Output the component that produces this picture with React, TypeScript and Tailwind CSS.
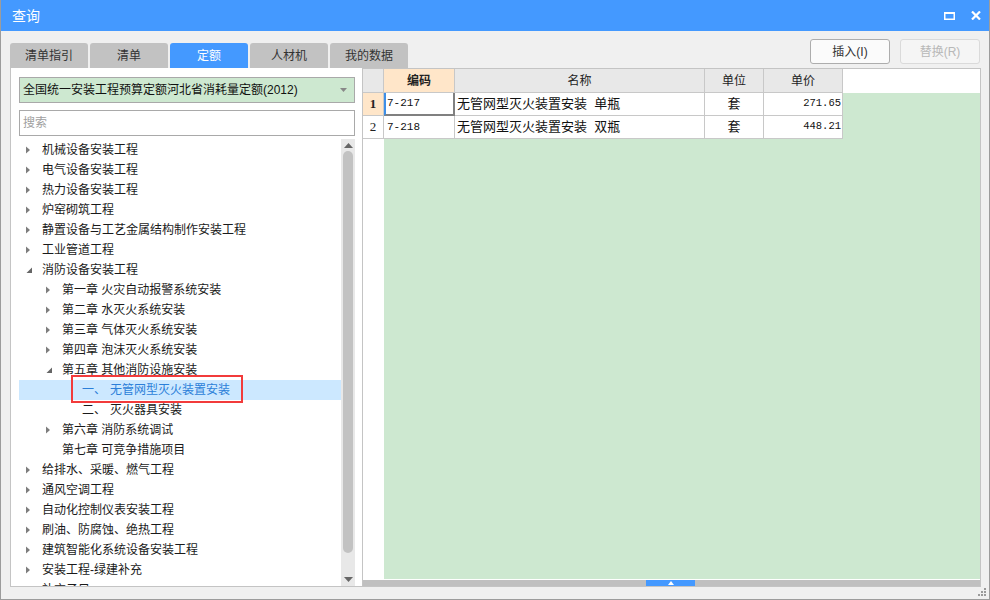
import React from 'react';

type Node = { level: number; text: string; state: 'closed' | 'open' | 'leaf'; prefix?: string; selected?: boolean };

const tree: Node[] = [
    { level: 0, text: '机械设备安装工程', state: 'closed' },
    { level: 0, text: '电气设备安装工程', state: 'closed' },
    { level: 0, text: '热力设备安装工程', state: 'closed' },
    { level: 0, text: '炉窑砌筑工程', state: 'closed' },
    { level: 0, text: '静置设备与工艺金属结构制作安装工程', state: 'closed' },
    { level: 0, text: '工业管道工程', state: 'closed' },
    { level: 0, text: '消防设备安装工程', state: 'open' },
    { level: 1, text: '第一章 火灾自动报警系统安装', state: 'closed' },
    { level: 1, text: '第二章 水灭火系统安装', state: 'closed' },
    { level: 1, text: '第三章 气体灭火系统安装', state: 'closed' },
    { level: 1, text: '第四章 泡沫灭火系统安装', state: 'closed' },
    { level: 1, text: '第五章 其他消防设施安装', state: 'open' },
    { level: 2, prefix: '一、', text: '无管网型灭火装置安装', state: 'leaf', selected: true },
    { level: 2, prefix: '二、', text: '灭火器具安装', state: 'leaf' },
    { level: 1, text: '第六章 消防系统调试', state: 'closed' },
    { level: 1, text: '第七章 可竞争措施项目', state: 'leaf' },
    { level: 0, text: '给排水、采暖、燃气工程', state: 'closed' },
    { level: 0, text: '通风空调工程', state: 'closed' },
    { level: 0, text: '自动化控制仪表安装工程', state: 'closed' },
    { level: 0, text: '刷油、防腐蚀、绝热工程', state: 'closed' },
    { level: 0, text: '建筑智能化系统设备安装工程', state: 'closed' },
    { level: 0, text: '安装工程-绿建补充', state: 'closed' },
    { level: 0, text: '补充子目', state: 'closed' },
];

const indent = ['pl-[7px]', 'pl-[27px]', 'pl-[47px]'];

const tabs = ['清单指引', '清单', '定额', '人材机', '我的数据'];

const rows = [
    { no: '1', code: '7-217', name: '无管网型灭火装置安装  单瓶', unit: '套', price: '271.65' },
    { no: '2', code: '7-218', name: '无管网型灭火装置安装  双瓶', unit: '套', price: '448.21' },
];

function Toggle({ state }: { state: Node['state'] }) {
    return (
        <span className="w-[16px] h-[20px] flex items-center shrink-0">
            {state === 'closed' && (
                <svg width="5" height="8" viewBox="0 0 5 8"><polygon points="0,0.5 4,4 0,7.5" fill="#7d7d7d" /></svg>
            )}
            {state === 'open' && (
                <svg width="7" height="7" viewBox="0 0 7 7"><polygon points="6,0.5 6,6 0.5,6" fill="#666" /></svg>
            )}
        </span>
    );
}

export default function App() {
    return (
        <div className="w-[990px] h-[600px] bg-[#f0f0f0] border-x border-b border-[#9c9c9c] flex flex-col relative overflow-hidden font-['Liberation_Sans','Noto_Sans_CJK_SC',sans-serif] text-[#222]">
            {/* title bar */}
            <div className="h-[31px] bg-[#4499ff] flex items-center justify-between pl-[11px] pr-[8px] text-white shrink-0">
                <span className="text-[14px] leading-none">查询</span>
                <div className="flex items-center gap-[16px]">
                    <svg width="11" height="8" viewBox="0 0 11 8">
                        <rect x="0.75" y="1" width="9.5" height="6.25" fill="none" stroke="#fff" strokeWidth="1.5" />
                        <rect x="0" y="0" width="11" height="2" fill="#fff" />
                    </svg>
                    <svg width="10" height="9" viewBox="0 0 10 9">
                        <path d="M1 0.5 L9 8.5 M9 0.5 L1 8.5" stroke="#fff" strokeWidth="2.2" />
                    </svg>
                </div>
            </div>

            {/* tabs + buttons */}
            <div className="h-[37px] flex justify-between pl-[9px] pr-[9px] shrink-0">
                <div className="flex items-end gap-[2px]">
                    {tabs.map((t, i) => (
                        <div
                            key={t}
                            className={
                                i === 2
                                    ? 'w-[78px] h-[25px] rounded-t-[3px] bg-[#4499ff] text-white text-[12px] flex items-center justify-center'
                                    : 'w-[78px] h-[25px] rounded-t-[3px] bg-[#c2c2c2] text-[#333] text-[12px] flex items-center justify-center'
                            }
                        >
                            {t}
                        </div>
                    ))}
                </div>
                <div className="flex items-start gap-[10px] pt-[8px]">
                    <button className="w-[80px] h-[25px] rounded-[3px] border border-[#adadad] bg-[#fbfbfb] text-[12px] text-[#333]">插入(I)</button>
                    <button className="w-[80px] h-[25px] rounded-[3px] border border-[#dadada] bg-[#f5f5f5] text-[12px] text-[#b8b8b8]">替换(R)</button>
                </div>
            </div>

            {/* main */}
            <div className="h-[519px] flex pl-[9px] shrink-0">
                {/* left panel */}
                <div className="w-[352px] bg-white border-l border-b border-[#c4c4c4] flex flex-col pl-[8px] pt-[9px]">
                    <div className="w-[336px] h-[26px] bg-[#cde8d0] border border-[#a9a9a9] flex items-center justify-between pl-[3px] pr-[7px] shrink-0">
                        <span className="text-[12px] text-[#111]">全国统一安装工程预算定额河北省消耗量定额(2012)</span>
                        <svg width="7" height="4" viewBox="0 0 7 4"><polygon points="0,0 7,0 3.5,4" fill="#888" /></svg>
                    </div>
                    <div className="w-[336px] h-[26px] mt-[7px] bg-white border border-[#a9a9a9] flex items-center pl-[3px] shrink-0">
                        <span className="text-[12px] text-[#a0a0a0]">搜索</span>
                    </div>
                    <div className="mt-[3px] flex-1 flex w-[336px] min-h-0">
                        <div className="flex-1 overflow-hidden pt-[1px]">
                            {tree.map((n, i) => (
                                <div
                                    key={i}
                                    className={`relative h-[20px] flex items-center ${indent[n.level]} ${n.selected ? 'bg-[#cce8ff] text-[#2b7fd9]' : 'text-[#1a1a1a]'}`}
                                >
                                    <Toggle state={n.state} />
                                    {n.prefix && <span className="w-[28px] text-[12px] leading-none">{n.prefix}</span>}
                                    <span className="text-[12px] leading-none whitespace-pre">{n.text}</span>
                                    {n.selected && (
                                        <div className="absolute left-[52px] top-[-5px] w-[172px] h-[28px] border-2 border-[#f23b3b]" />
                                    )}
                                </div>
                            ))}
                        </div>
                        <div className="w-[14px] bg-[#e8e8e8] flex flex-col items-center">
                            <div className="h-[12px] flex items-center justify-center">
                                <svg width="9" height="5" viewBox="0 0 9 5"><polygon points="4.5,0 9,5 0,5" fill="#666" /></svg>
                            </div>
                            <div className="w-[10px] h-[402px] rounded-full bg-[#c2c2c2]" />
                            <div className="flex-1 flex items-end pb-[4px]">
                                <svg width="9" height="5" viewBox="0 0 9 5"><polygon points="0,0 9,0 4.5,5" fill="#666" /></svg>
                            </div>
                        </div>
                    </div>
                </div>

                {/* right panel */}
                <div className="w-[619px] border border-[#c4c4c4] bg-white flex flex-col">
                    <div className="h-[24px] flex shrink-0 text-[12px] text-[#222]">
                        <div className="w-[21px] bg-[#e8e8e8] border-r border-b border-[#c8c8c8]" />
                        <div className="w-[71px] bg-[#ffe6c9] border-r border-b border-[#c8c8c8] flex items-center justify-center font-bold">编码</div>
                        <div className="w-[250px] bg-[#e8e8e8] border-r border-b border-[#c8c8c8] flex items-center justify-center">名称</div>
                        <div className="w-[59px] bg-[#e8e8e8] border-r border-b border-[#c8c8c8] flex items-center justify-center">单位</div>
                        <div className="w-[79px] bg-[#e8e8e8] border-r border-b border-[#c8c8c8] flex items-center justify-center">单价</div>
                    </div>
                    <div className="flex-1 flex min-h-0">
                        <div className="w-[21px] bg-white">
                            {rows.map((r, i) => (
                                <div
                                    key={r.no}
                                    className={`h-[23px] border-r border-b border-[#c8c8c8] flex items-center justify-center font-['Liberation_Serif',serif] text-[13px] ${i === 0 ? 'bg-[#ffe6c9] font-bold' : 'bg-white'}`}
                                >
                                    {r.no}
                                </div>
                            ))}
                        </div>
                        <div className="flex-1 bg-[#cde8d0]">
                            {rows.map((r, i) => (
                                <div key={r.no} className="h-[23px] flex text-[#111]">
                                    <div
                                        className={
                                            i === 0
                                                ? "w-[71px] bg-white border-l-2 border-l-[#3d8fe8] border-r-2 border-b-2 border-r-[#808080] border-b-[#808080] flex items-center pl-[1px] font-['Liberation_Mono',monospace] text-[11px]"
                                                : "w-[71px] bg-white border-r border-b border-[#c8c8c8] flex items-center pl-[3px] font-['Liberation_Mono',monospace] text-[11px]"
                                        }
                                    >
                                        {r.code}
                                    </div>
                                    <div className="w-[250px] bg-white border-r border-b border-[#c8c8c8] flex items-center pl-[2px] text-[13px] whitespace-pre">{r.name}</div>
                                    <div className="w-[59px] bg-white border-r border-b border-[#c8c8c8] flex items-center justify-center text-[13px]">{r.unit}</div>
                                    <div className="w-[79px] bg-white border-r border-b border-[#c8c8c8] flex items-center justify-end pr-[1px] font-['Liberation_Mono',monospace] text-[10.5px]">{r.price}</div>
                                </div>
                            ))}
                        </div>
                    </div>
                    <div className="h-[1px] bg-white shrink-0" />
                    <div className="h-[6px] bg-[#c0c0c0] flex shrink-0">
                        <div className="ml-[283px] w-[49px] h-[6px] bg-[#4499ff] flex items-center justify-center">
                            <svg width="6" height="4" viewBox="0 0 6 4"><polygon points="3,0 6,4 0,4" fill="#fff" /></svg>
                        </div>
                    </div>
                </div>
            </div>

            {/* resize grip */}
            <div className="absolute right-[3px] bottom-[3px] grid grid-cols-3 gap-[1px]">
                <span className="w-[2px] h-[2px]" />
                <span className="w-[2px] h-[2px]" />
                <span className="w-[2px] h-[2px] bg-[#9a9a9a]" />
                <span className="w-[2px] h-[2px]" />
                <span className="w-[2px] h-[2px] bg-[#9a9a9a]" />
                <span className="w-[2px] h-[2px] bg-[#9a9a9a]" />
                <span className="w-[2px] h-[2px] bg-[#9a9a9a]" />
                <span className="w-[2px] h-[2px] bg-[#9a9a9a]" />
                <span className="w-[2px] h-[2px] bg-[#9a9a9a]" />
            </div>
        </div>
    );
}
